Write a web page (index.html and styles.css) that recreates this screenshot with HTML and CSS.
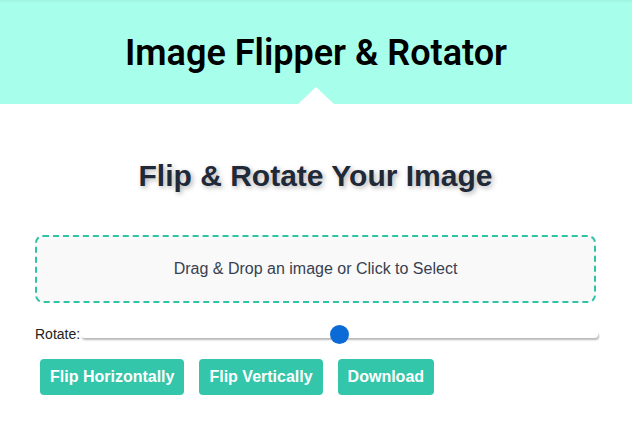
FILE: index.html
```html
<!DOCTYPE html>
<html>
<head>
<meta charset="utf-8">
<link rel="stylesheet" href="styles.css">
</head>
<body>
<header class="top">
  <h1 class="top-title">Image Flipper &amp; Rotator</h1>
  <span class="notch"></span>
</header>
<main class="wrap">
  <h2 class="heading">Flip &amp; Rotate Your Image</h2>
  <div class="drop">Drag &amp; Drop an image or Click to Select</div>
  <div class="rotate-row">
    <label class="rotate-label" for="rot">Rotate:</label>
    <input class="range" id="rot" type="range" min="-180" max="180" value="0">
  </div>
  <div class="actions">
    <button class="btn">Flip Horizontally</button>
    <button class="btn">Flip Vertically</button>
    <button class="btn">Download</button>
  </div>
</main>
</body>
</html>
```
FILE: styles.css
```css
html, body {
  margin: 0;
  padding: 0;
  background: #ffffff;
}
body {
  font-family: "Liberation Sans", Arial, sans-serif;
}
.top {
  position: relative;
  height: 104px;
  background: #a7ffeb;
  box-shadow: inset 0 3px 3px -2px rgba(0,0,0,0.08);
  display: flex;
  align-items: center;
  justify-content: center;
}
.top-title {
  margin: 0;
  font-family: Roboto, sans-serif;
  font-weight: 600;
  font-size: 36px;
  color: #000;
  padding-top: 1px;
}
.notch {
  position: absolute;
  left: 298px;
  bottom: 0;
  width: 0;
  height: 0;
  border-left: 18px solid transparent;
  border-right: 18px solid transparent;
  border-bottom: 17px solid #ffffff;
}
.wrap {
  width: 561px;
  margin: 0 0 0 35px;
  padding: 0;
}
.heading {
  margin: 55px 0 0 0;
  text-align: center;
  font-size: 30px;
  font-weight: bold;
  color: #1f2937;
  line-height: 34px;
  text-shadow: 2px 2px 5px rgba(0,0,0,0.3);
}
.drop {
  margin-top: 42px;
  height: 68px;
  box-sizing: border-box;
  border: 2px dashed #2ec4a5;
  border-radius: 8px;
  background: #f9f9f9;
  display: flex;
  align-items: center;
  justify-content: center;
  font-size: 16px;
  color: #374151;
}
.rotate-row {
  margin-top: 23px;
  display: flex;
  align-items: center;
  margin-right: -2px;
}
.rotate-label {
  font-size: 14px;
  color: #222;
}
.range {
  -webkit-appearance: none;
  appearance: none;
  flex: 1;
  margin: 0 0 0 1px;
  height: 7px;
  background: #ffffff;
  border-radius: 4px;
  box-shadow: 1px 2px 2px rgba(0,0,0,0.28);
  outline: none;
}
.range::-webkit-slider-thumb {
  -webkit-appearance: none;
  appearance: none;
  width: 19px;
  height: 19px;
  border-radius: 50%;
  background: #0a6ad6;
  cursor: pointer;
}
.actions {
  margin-top: 17px;
  padding-left: 5px;
  display: flex;
  gap: 15px;
}
.btn {
  height: 36px;
  padding: 0 10px;
  border: none;
  border-radius: 4px;
  background: #33c6aa;
  color: #ffffff;
  font-family: "Liberation Sans", Arial, sans-serif;
  font-weight: bold;
  font-size: 16px;
}
```
